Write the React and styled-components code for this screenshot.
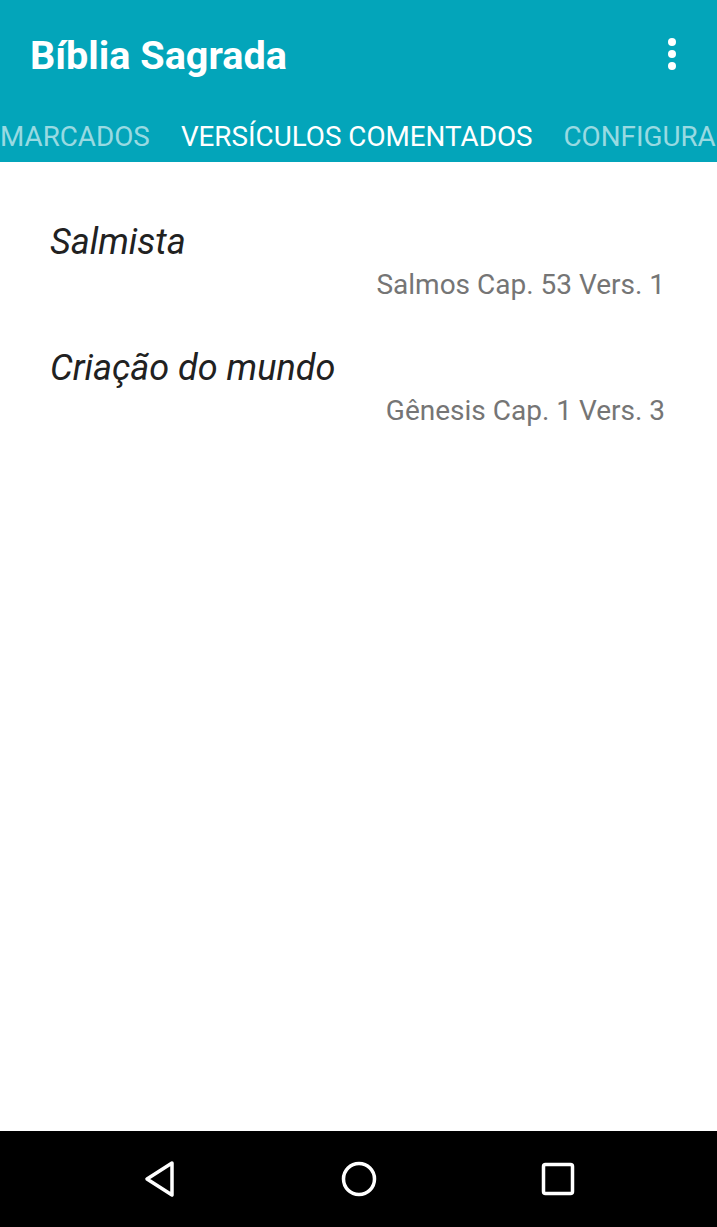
import styled, { createGlobalStyle } from "styled-components";

const GlobalStyle = createGlobalStyle`
  html, body {
    margin: 0;
    padding: 0;
    background: #ffffff;
  }
  body {
    font-family: Roboto, "Liberation Sans", sans-serif;
  }
`;

const Screen = styled.div`
  width: 717px;
  height: 1227px;
  display: flex;
  flex-direction: column;
  overflow: hidden;
  background: #fff;
`;

const Header = styled.header`
  background: #03a5ba;
  color: #fff;
  display: flex;
  flex-direction: column;
`;

const Toolbar = styled.div`
  height: 108px;
  display: flex;
  align-items: center;
  justify-content: space-between;
  padding: 0 30px;
`;

const Title = styled.h1`
  margin: 0;
  font-size: 39.6px;
  font-weight: 700;
  letter-spacing: 0;
  padding-top: 3px;
`;

const MenuButton = styled.button`
  border: 0;
  background: none;
  padding: 0;
  width: 30px;
  height: 40px;
  display: flex;
  align-items: center;
  justify-content: center;
`;

const Tabs = styled.nav`
  height: 54px;
  display: flex;
  align-items: center;
  gap: 31px;
  white-space: nowrap;
  overflow: hidden;
  padding-top: 3px;
  box-sizing: border-box;
`;

const Tab = styled.span`
  font-size: 27.8px;
  text-transform: uppercase;
  color: ${(p) => (p.$active ? "#ffffff" : "rgba(255,255,255,0.6)")};
  flex-shrink: 0;
`;

const List = styled.main`
  flex: 1;
  padding: 60px 52px 0 50px;
  display: flex;
  flex-direction: column;
  gap: 43px;
`;

const Item = styled.div`
  display: flex;
  flex-direction: column;
`;

const ItemTitle = styled.div`
  font-size: 36px;
  font-style: italic;
  color: #212121;
  line-height: 40px;
`;

const ItemRef = styled.div`
  font-size: 28px;
  color: #757575;
  text-align: right;
  line-height: 40px;
  margin-top: 3px;
`;

const NavBar = styled.footer`
  height: 96px;
  background: #000;
  display: flex;
  align-items: center;
  justify-content: space-around;
  padding: 0 60px;
`;

const NavIcon = styled.svg`
  width: 42px;
  height: 42px;
`;

const items = [
  { title: "Salmista", ref: "Salmos Cap. 53 Vers. 1" },
  { title: "Criação do mundo", ref: "Gênesis Cap. 1 Vers. 3" },
];

export default function App() {
  return (
    <>
      <GlobalStyle />
      <Screen>
        <Header>
          <Toolbar>
            <Title>Bíblia Sagrada</Title>
            <MenuButton aria-label="Mais opções">
              <svg width="10" height="34" viewBox="0 0 10 34">
                <circle cx="5" cy="5" r="4" fill="#fff" />
                <circle cx="5" cy="17" r="4" fill="#fff" />
                <circle cx="5" cy="29" r="4" fill="#fff" />
              </svg>
            </MenuButton>
          </Toolbar>
          <Tabs>
            <Tab>Marcados</Tab>
            <Tab $active>Versículos comentados</Tab>
            <Tab>Configurações</Tab>
          </Tabs>
        </Header>
        <List>
          {items.map((it) => (
            <Item key={it.title}>
              <ItemTitle>{it.title}</ItemTitle>
              <ItemRef>{it.ref}</ItemRef>
            </Item>
          ))}
        </List>
        <NavBar>
          <NavIcon viewBox="0 0 42 42">
            <path d="M33 5 L8 21 L33 37 Z" fill="none" stroke="#fff" strokeWidth="3.5" strokeLinejoin="round" />
          </NavIcon>
          <NavIcon viewBox="0 0 42 42">
            <circle cx="21" cy="21" r="15.5" fill="none" stroke="#fff" strokeWidth="3.5" />
          </NavIcon>
          <NavIcon viewBox="0 0 42 42">
            <rect x="6.5" y="6.5" width="29" height="29" rx="2" fill="none" stroke="#fff" strokeWidth="3.5" />
          </NavIcon>
        </NavBar>
      </Screen>
    </>
  );
}
